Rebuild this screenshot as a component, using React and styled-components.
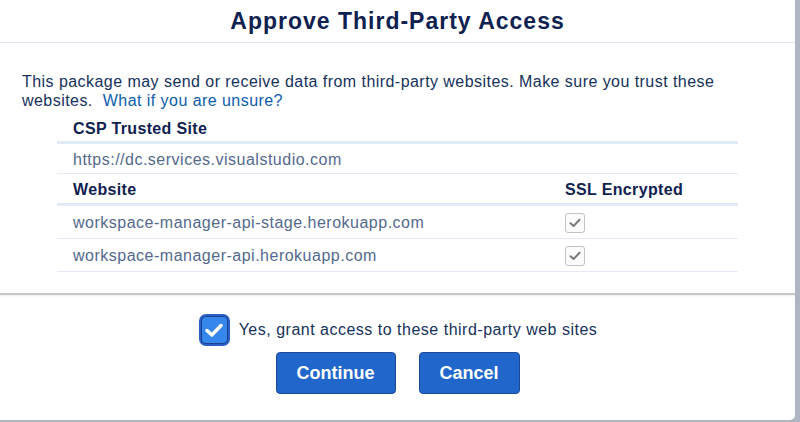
import React from "react";
import styled, { createGlobalStyle } from "styled-components";

const GlobalStyle = createGlobalStyle`
  html, body { margin: 0; padding: 0; }
  body {
    background: #aeb6c4;
    font-family: "Liberation Sans", Arial, sans-serif;
    width: 800px;
    height: 422px;
    overflow: hidden;
  }
`;

const Backdrop = styled.div`
  width: 800px;
  height: 422px;
  display: flex;
  align-items: flex-start;
`;

const Modal = styled.div`
  width: 795px;
  height: 420px;
  background: #ffffff;
  border-bottom-right-radius: 5px;
  display: flex;
  flex-direction: column;
  color: #16325c;
`;

const Header = styled.header`
  height: 43px;
  border-bottom: 1px solid #dde3ec;
  display: flex;
  align-items: center;
  justify-content: center;
  box-sizing: border-box;
`;

const Title = styled.h1`
  margin: 0;
  font-size: 23px;
  font-weight: 700;
  color: #0f2150;
  letter-spacing: 1px;
`;

const Body = styled.section`
  height: 250px;
  padding: 29px 22px 0 22px;
  box-sizing: border-box;
`;

const Intro = styled.p`
  margin: 0;
  font-size: 16px;
  line-height: 19px;
  letter-spacing: 0.45px;
  color: #16325c;
`;

const Link = styled.a`
  color: #0b5cab;
  text-decoration: none;
  margin-left: 10px;
`;

const Table = styled.div`
  margin: 3px 35px 0 35px;
  display: grid;
  grid-template-columns: 1fr 173px;
`;

const HeadCell = styled.div`
  height: ${(p) => p.$h}px;
  box-sizing: border-box;
  display: flex;
  align-items: center;
  padding: 3px 0 0 ${(p) => (p.$first ? 16 : 0)}px;
  font-size: 16px;
  letter-spacing: 0.35px;
  font-weight: 700;
  color: #0f2150;
  border-bottom: 3px solid #e1ebf7;
`;

const Cell = styled.div`
  height: ${(p) => p.$h}px;
  box-sizing: border-box;
  display: flex;
  align-items: center;
  padding: 2px 0 0 ${(p) => (p.$first ? 16 : 0)}px;
  font-size: 16px;
  letter-spacing: 0.5px;
  color: #54698d;
  border-bottom: 1px solid #e3eaf3;
`;

const Divider = styled.div`
  height: 2px;
  background: #c6c6c6;
  box-shadow: 0 1px 2px rgba(0, 0, 0, 0.08);
`;

const Footer = styled.footer`
  flex: 1;
  display: flex;
  flex-direction: column;
  align-items: center;
  padding-top: 18px;
`;

const CheckRow = styled.label`
  display: flex;
  align-items: center;
  gap: 8px;
  font-size: 16px;
  letter-spacing: 0.5px;
  color: #16325c;
`;

const BigCheck = styled.span`
  width: 25px;
  height: 26px;
  border-radius: 5px;
  background: #3587ec;
  border: 1px solid #1c3f8f;
  box-shadow: 0 0 0 2px #2a5fc4;
  display: flex;
  align-items: center;
  justify-content: center;
  margin: 3px;
`;

const SmallCheck = styled.span`
  width: 18px;
  height: 18px;
  border: 1px solid #c2c2c2;
  border-radius: 3px;
  background: #fbfbfb;
  display: flex;
  align-items: center;
  justify-content: center;
`;

const Buttons = styled.div`
  display: flex;
  gap: 23px;
  margin-top: 5px;
`;

const Button = styled.button`
  width: ${(p) => p.$w}px;
  height: 42px;
  border-radius: 4px;
  border: 1px solid #1a4a96;
  background: #2167cb;
  color: #ffffff;
  font-family: "Liberation Sans", Arial, sans-serif;
  font-size: 18px;
  font-weight: 700;
  cursor: pointer;
`;

const GreyTick = () => (
  <svg width="12" height="10" viewBox="0 0 12 10">
    <path d="M1.5 5.2 L4.6 8 L10.5 1.8" fill="none" stroke="#7a7a7a" strokeWidth="2" strokeLinecap="round" strokeLinejoin="round" />
  </svg>
);

const WhiteTick = () => (
  <svg width="18" height="15" viewBox="0 0 18 15">
    <path d="M2 7.5 L6.8 12 L16 2.5" fill="none" stroke="#ffffff" strokeWidth="3.4" strokeLinecap="round" strokeLinejoin="round" />
  </svg>
);

const sites = [
  "workspace-manager-api-stage.herokuapp.com",
  "workspace-manager-api.herokuapp.com",
];

export default function App() {
  return (
    <>
      <GlobalStyle />
      <Backdrop>
        <Modal>
          <Header>
            <Title>Approve Third-Party Access</Title>
          </Header>
          <Body>
            <Intro>
              This package may send or receive data from third-party websites. Make sure you trust these websites.
              <Link href="#">What if you are unsure?</Link>
            </Intro>
            <Table>
              <HeadCell $first $h={31}>CSP Trusted Site</HeadCell>
              <HeadCell $h={31} />
              <Cell $first $h={30}>https://dc.services.visualstudio.com</Cell>
              <Cell $h={30} />
              <HeadCell $first $h={32}>Website</HeadCell>
              <HeadCell $h={32}>SSL Encrypted</HeadCell>
              {sites.map((s) => (
                <React.Fragment key={s}>
                  <Cell $first $h={33}>{s}</Cell>
                  <Cell $h={33}>
                    <SmallCheck>
                      <GreyTick />
                    </SmallCheck>
                  </Cell>
                </React.Fragment>
              ))}
            </Table>
          </Body>
          <Divider />
          <Footer>
            <CheckRow>
              <BigCheck>
                <WhiteTick />
              </BigCheck>
              Yes, grant access to these third-party web sites
            </CheckRow>
            <Buttons>
              <Button $w={120}>Continue</Button>
              <Button $w={101}>Cancel</Button>
            </Buttons>
          </Footer>
        </Modal>
      </Backdrop>
    </>
  );
}
